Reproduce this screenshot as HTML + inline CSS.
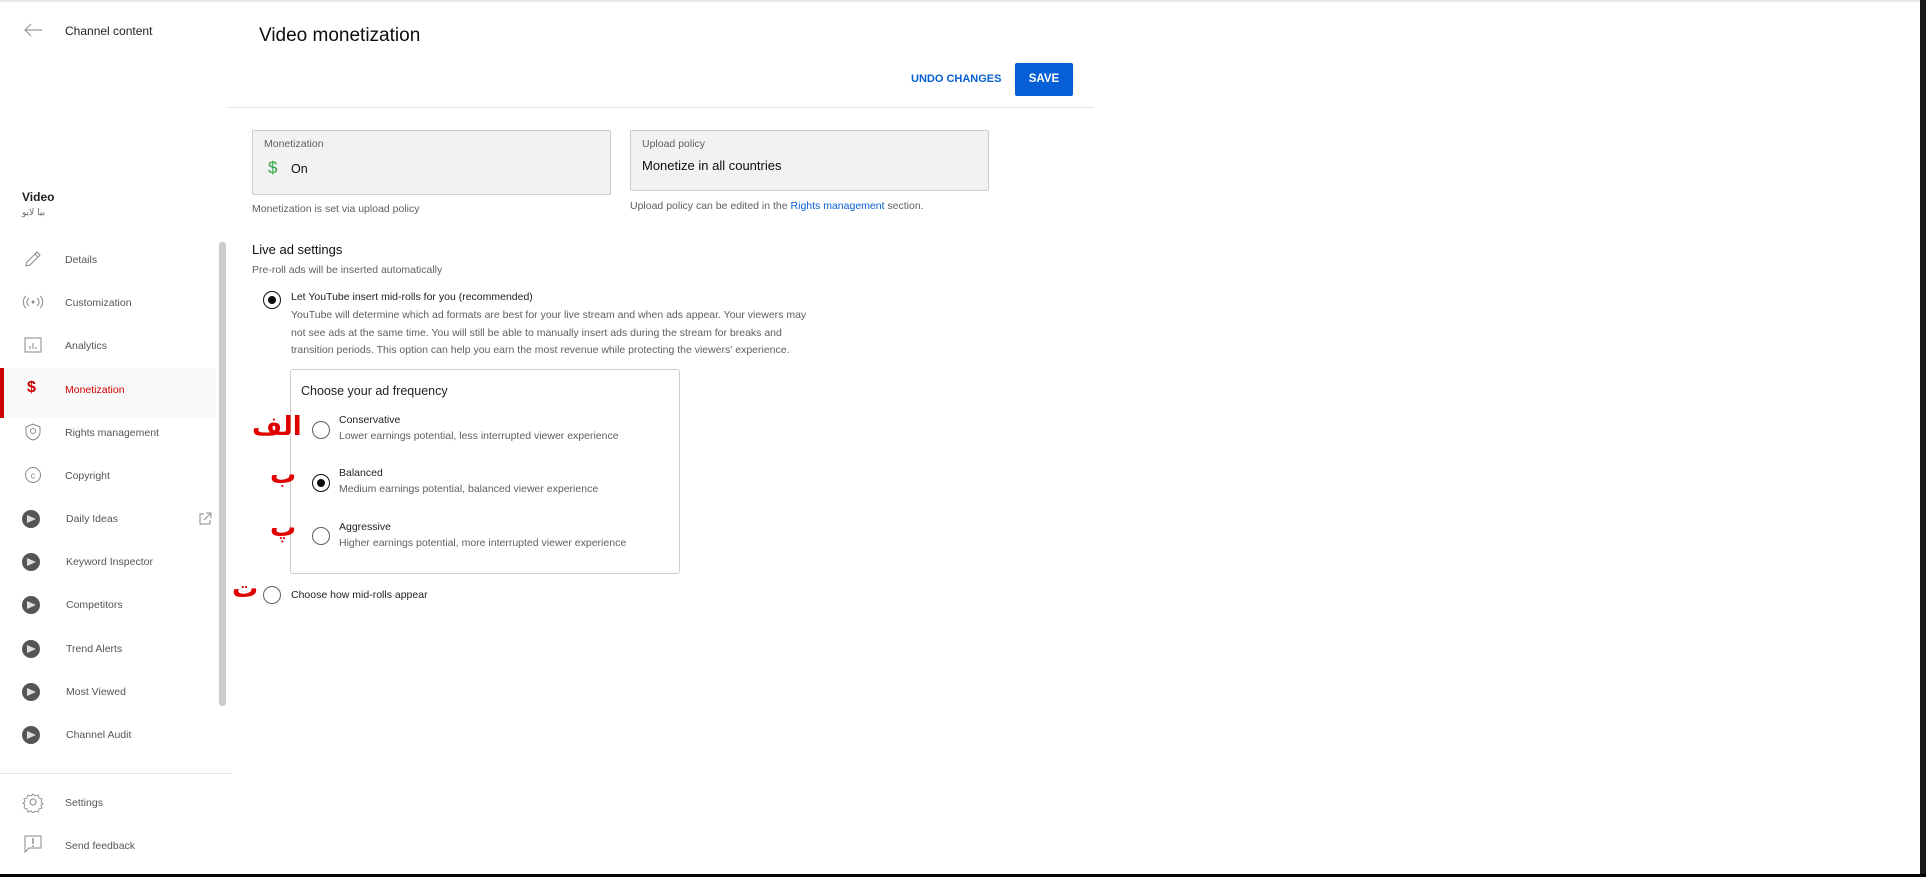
<!DOCTYPE html>
<html><head><meta charset="utf-8">
<style>
*{margin:0;padding:0;box-sizing:border-box}
body{width:1926px;height:877px;overflow:hidden;background:#fff;font-family:"Liberation Sans","Noto Sans CJK SC",sans-serif;color:#0d0d0d;position:relative}
.a{position:absolute;white-space:nowrap}
.side{font-size:10.5px;color:#555}
.ic{position:absolute;left:22px;width:22px;height:22px}
.g{color:#606060}
.radio{position:absolute;width:18px;height:18px;border:1.5px solid #606060;border-radius:50%}
.radio.on{border-color:#0d0d0d}
.radio.on:after{content:"";position:absolute;left:3.5px;top:3.5px;width:8px;height:8px;border-radius:50%;background:#0d0d0d}
.fa{position:absolute;color:#e00000;font-family:"DejaVu Sans",sans-serif;font-size:26px;font-weight:bold}
.dot{position:absolute;left:22px;width:18px;height:18px;border-radius:50%;background:#555}
.dot:after{content:"";position:absolute;left:5px;top:5px;width:0;height:0;border-top:4px solid transparent;border-bottom:4px solid transparent;border-left:9px solid #ddd}
</style></head><body>
<div class="a" style="left:0;top:0;width:1920px;height:2px;background:#e8e8e8"></div>
<div class="a" style="left:1920px;top:0;width:6px;height:877px;background:#1a1a1a"></div>
<div class="a" style="left:0;top:874px;width:1926px;height:3px;background:#000"></div>

<!-- sidebar -->
<svg class="a" style="left:23px;top:22px" width="20" height="16" viewBox="0 0 20 16"><path d="M19 8H2M8 2L2 8l6 6" fill="none" stroke="#999" stroke-width="1.2"/></svg>
<div class="a" style="left:65px;top:24px;font-size:12px;color:#222">Channel content</div>
<div class="a" style="left:22px;top:190px;font-size:12px;font-weight:bold;color:#222">Video</div>
<div class="a" style="left:22px;top:208px;font-size:9px;color:#666;font-family:'DejaVu Sans',sans-serif">بیا لایو</div>

<div class="a" style="left:0;top:368px;width:216px;height:50px;background:#f9f9f9"></div>
<div class="a" style="left:0;top:368px;width:4px;height:50px;background:#cc0000"></div>
<div class="a" style="left:219px;top:242px;width:7px;height:464px;background:#ccc;border-radius:3px"></div>

<svg class="ic" style="top:248px" viewBox="0 0 22 22"><path d="M4 18l1-4L15 4l3 3L8 17z M13 6l3 3" fill="none" stroke="#888" stroke-width="1"/></svg>
<div class="a side" style="left:65px;top:254px">Details</div>
<svg class="ic" style="top:291px" viewBox="0 0 22 22"><circle cx="11" cy="11" r="1.5" fill="#888"/><path d="M7 7a5 5 0 0 0 0 8M15 7a5 5 0 0 1 0 8M4 5a8 8 0 0 0 0 12M18 5a8 8 0 0 1 0 12" fill="none" stroke="#888" stroke-width="1"/></svg>
<div class="a side" style="left:65px;top:297px">Customization</div>
<svg class="ic" style="top:334px" viewBox="0 0 22 22"><rect x="3" y="4" width="16" height="14" fill="none" stroke="#888"/><path d="M8 15v-3M11 15v-6M14 15v-2" stroke="#888"/></svg>
<div class="a side" style="left:65px;top:340px">Analytics</div>
<div class="a" style="left:27px;top:379px;font-size:16px;color:#cc0000;font-weight:bold">$</div>
<div class="a" style="left:65px;top:384px;font-size:10.5px;color:#cc0000">Monetization</div>
<svg class="ic" style="top:421px" viewBox="0 0 22 22"><path d="M11 3l7 3v5c0 4-3 7-7 8-4-1-7-4-7-8V6z" fill="none" stroke="#888"/><circle cx="11" cy="10" r="2.5" fill="none" stroke="#888"/></svg>
<div class="a side" style="left:65px;top:427px">Rights management</div>
<svg class="ic" style="top:464px" viewBox="0 0 22 22"><circle cx="11" cy="11" r="7.5" fill="none" stroke="#888"/><text x="11" y="14.5" font-size="9" text-anchor="middle" fill="#888" font-family="Liberation Sans">c</text></svg>
<div class="a side" style="left:65px;top:470px">Copyright</div>

<div class="dot" style="top:510px"></div><div class="a side" style="left:66px;top:513px">Daily Ideas</div>
<svg class="a" style="left:198px;top:512px" width="14" height="14" viewBox="0 0 14 14"><path d="M6 2H2v10h10V8M8 1h5v5M13 1L6 8" fill="none" stroke="#888"/></svg>
<div class="dot" style="top:553px"></div><div class="a side" style="left:66px;top:556px">Keyword Inspector</div>
<div class="dot" style="top:596px"></div><div class="a side" style="left:66px;top:599px">Competitors</div>
<div class="dot" style="top:640px"></div><div class="a side" style="left:66px;top:643px">Trend Alerts</div>
<div class="dot" style="top:683px"></div><div class="a side" style="left:66px;top:686px">Most Viewed</div>
<div class="dot" style="top:726px"></div><div class="a side" style="left:66px;top:729px">Channel Audit</div>
<div class="a" style="left:0;top:773px;width:231px;height:1px;background:#e5e5e5"></div>
<svg class="ic" style="top:791px" viewBox="0 0 22 22"><circle cx="11" cy="11" r="3" fill="none" stroke="#888"/><path d="M11 3l2 2 3-1 1 3 3 1-1 3 2 2-2 1 1 3-3 1-1 3-3-1-2 2-2-2-3 1-1-3-3-1 1-3-2-2 2-1-1-3 3-1 1-3 3 1z" fill="none" stroke="#888" stroke-width="0.9"/></svg>
<div class="a side" style="left:65px;top:797px">Settings</div>
<svg class="ic" style="top:833px" viewBox="0 0 22 22"><path d="M3 3h16v12H7l-4 4z" fill="none" stroke="#888"/><path d="M11 5v6M11 12.5v1.5" stroke="#888" stroke-width="1.4"/></svg>
<div class="a side" style="left:65px;top:840px">Send feedback</div>

<!-- main -->
<div class="a" style="left:259px;top:25px;font-size:19px;color:#0d0d0d">Video monetization</div>
<div class="a" style="left:911px;top:73px;font-size:11px;font-weight:bold;color:#065fd4">UNDO CHANGES</div>
<div class="a" style="left:1015px;top:63px;width:58px;height:33px;background:#065fd4;border-radius:2px;color:#fff;font-size:11.5px;font-weight:bold;text-align:center;line-height:33px">SAVE</div>
<div class="a" style="left:228px;top:107px;width:866px;height:1px;background:#e5e5e5"></div>

<div class="a" style="left:252px;top:130px;width:359px;height:65px;background:#f2f2f2;border:1px solid #ccc;border-radius:2px"></div>
<div class="a g" style="left:264px;top:138px;font-size:10.5px">Monetization</div>
<div class="a" style="left:268px;top:158px;font-size:17px;color:#2ba640">$</div>
<div class="a" style="left:291px;top:162px;font-size:12.5px">On</div>
<div class="a g" style="left:252px;top:203px;font-size:10.5px">Monetization is set via upload policy</div>

<div class="a" style="left:630px;top:130px;width:359px;height:61px;background:#f2f2f2;border:1px solid #ccc;border-radius:2px"></div>
<div class="a g" style="left:642px;top:138px;font-size:10.5px">Upload policy</div>
<div class="a" style="left:642px;top:158px;font-size:13px">Monetize in all countries</div>
<div class="a g" style="left:630px;top:200px;font-size:10.5px">Upload policy can be edited in the <span style="color:#065fd4">Rights management</span> section.</div>

<div class="a" style="left:252px;top:242px;font-size:13px">Live ad settings</div>
<div class="a g" style="left:252px;top:264px;font-size:10.5px">Pre-roll ads will be inserted automatically</div>

<div class="radio on" style="left:263px;top:291px"></div>
<div class="a" style="left:291px;top:291px;font-size:10.5px;color:#222">Let YouTube insert mid-rolls for you (recommended)</div>
<div class="a g" style="left:291px;top:307px;font-size:10.5px;line-height:17.5px">YouTube will determine which ad formats are best for your live stream and when ads appear. Your viewers may<br>not see ads at the same time. You will still be able to manually insert ads during the stream for breaks and<br>transition periods. This option can help you earn the most revenue while protecting the viewers' experience.</div>

<div class="a" style="left:290px;top:369px;width:390px;height:205px;border:1px solid #ccc;border-radius:3px"></div>
<div class="a" style="left:301px;top:384px;font-size:12.5px;color:#222">Choose your ad frequency</div>

<div class="radio" style="left:312px;top:421px"></div>
<div class="a" style="left:339px;top:414px;font-size:10.5px;color:#222">Conservative</div>
<div class="a g" style="left:339px;top:430px;font-size:10.5px">Lower earnings potential, less interrupted viewer experience</div>
<div class="radio on" style="left:312px;top:474px"></div>
<div class="a" style="left:339px;top:467px;font-size:10.5px;color:#222">Balanced</div>
<div class="a g" style="left:339px;top:483px;font-size:10.5px">Medium earnings potential, balanced viewer experience</div>
<div class="radio" style="left:312px;top:527px"></div>
<div class="a" style="left:339px;top:521px;font-size:10.5px;color:#222">Aggressive</div>
<div class="a g" style="left:339px;top:537px;font-size:10.5px">Higher earnings potential, more interrupted viewer experience</div>

<div class="radio" style="left:263px;top:586px"></div>
<div class="a" style="left:291px;top:589px;font-size:10.5px;color:#222">Choose how mid-rolls appear</div>

<div class="fa" style="left:252px;top:412px">الف</div>
<div class="fa" style="left:270px;top:460px">ب</div>
<div class="fa" style="left:270px;top:513px">پ</div>
<div class="fa" style="left:232px;top:574px">ت</div>
</body></html>
